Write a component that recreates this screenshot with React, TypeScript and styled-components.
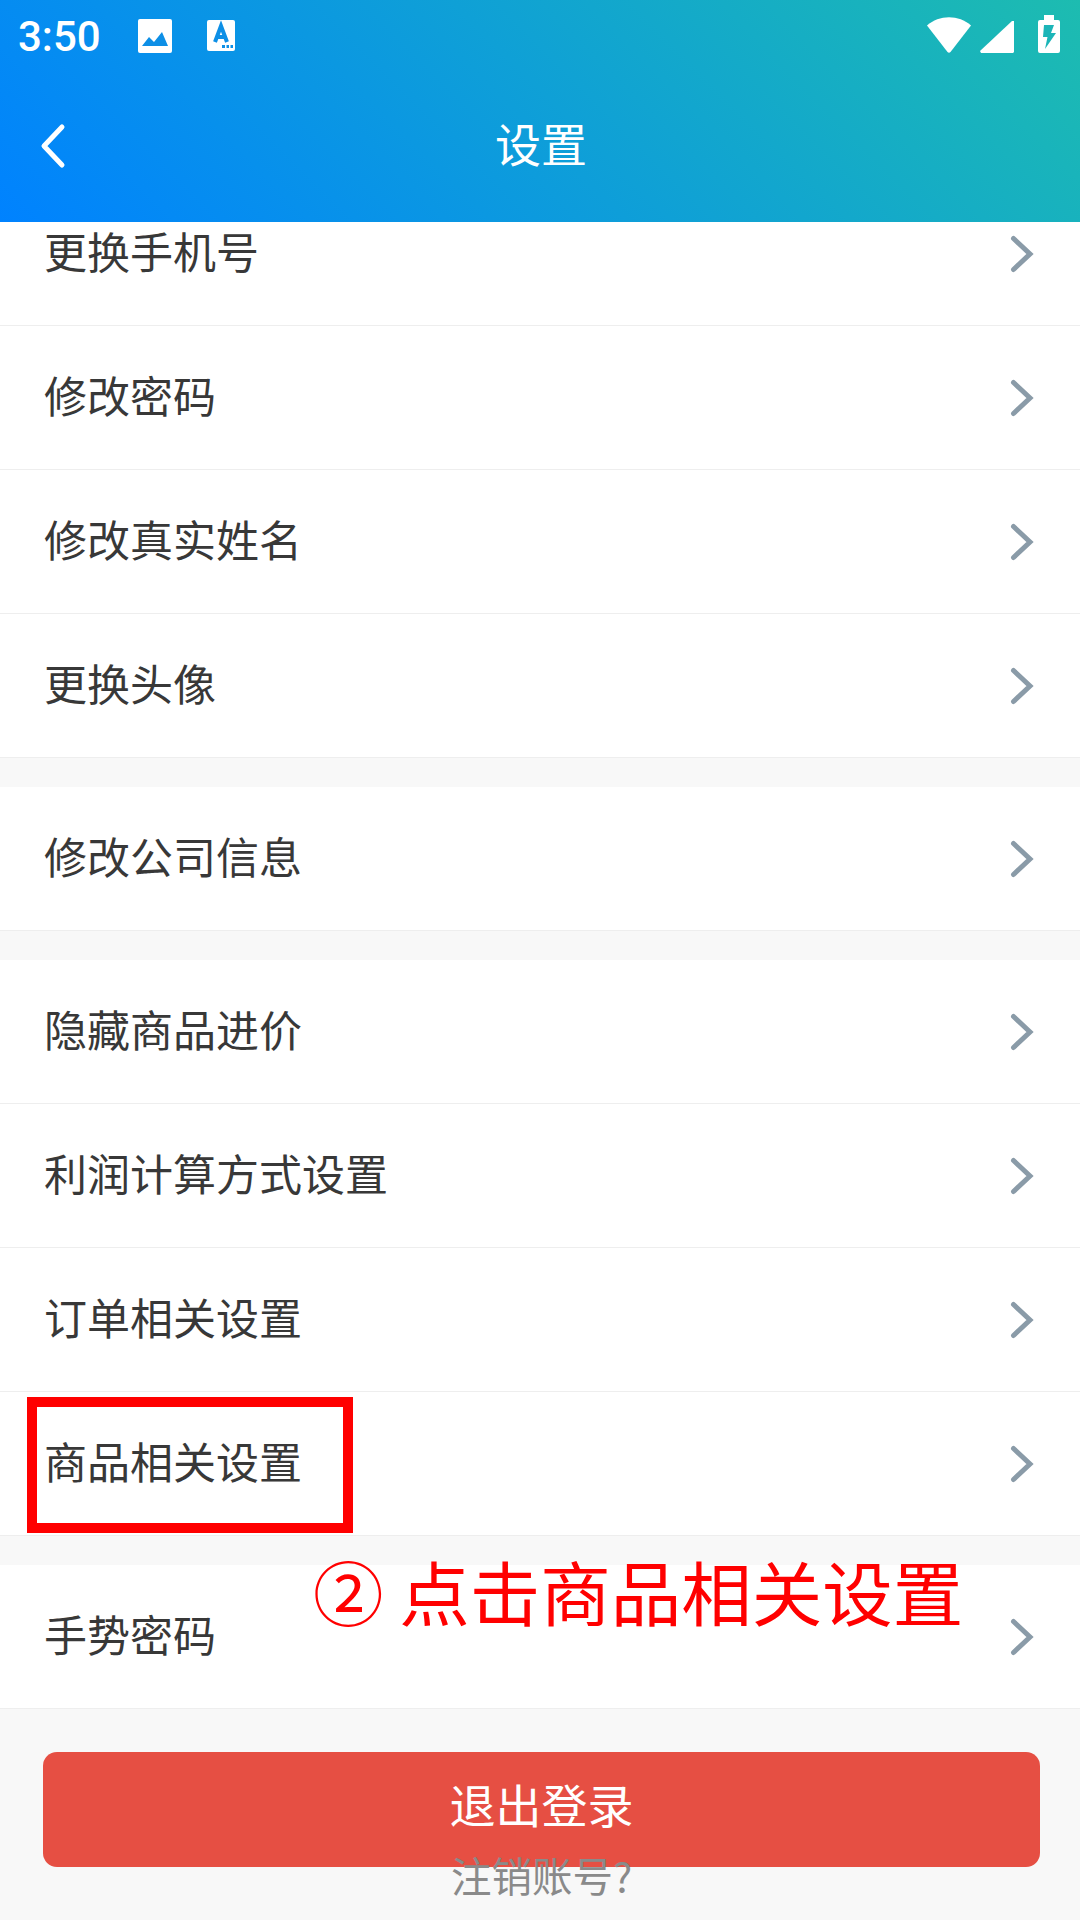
import { createGlobalStyle, styled } from "styled-components";

const rowGroups = [
	["更换手机号", "修改密码", "修改真实姓名", "更换头像"],
	["修改公司信息"],
	["隐藏商品进价", "利润计算方式设置", "订单相关设置", "商品相关设置"],
	["手势密码"],
];

const GlobalStyle = createGlobalStyle`
	html, body {
		margin: 0;
		padding: 0;
		background: #f8f8f8;
	}
	* {
		box-sizing: border-box;
	}
`;

const Page = styled.div`
	position: relative;
	width: 1080px;
	height: 1920px;
	overflow: hidden;
	background: #f8f8f8;
	font-family: "Noto Sans CJK SC", "Noto Sans", sans-serif;
`;

const Header = styled.header`
	position: relative;
	z-index: 2;
	height: 222px;
	background: linear-gradient(45deg, #0082ff, #1dbcb0);
	color: #fff;
`;

const StatusBar = styled.div`
	display: flex;
	align-items: flex-end;
	height: 74px;
	padding: 0 20px 21px 18px;
`;

const Clock = styled.span`
	font-family: Roboto, sans-serif;
	font-size: 42px;
	font-weight: 500;
	line-height: 32px;
	width: 120px;
`;

const StatusGroup = styled.div<{ $gap: number }>`
	display: flex;
	align-items: flex-end;
	gap: ${(p) => p.$gap}px;
`;

const Spacer = styled.div`
	flex: 1;
`;

const TitleBar = styled.div`
	display: flex;
	align-items: center;
	justify-content: center;
	position: relative;
	height: 148px;
`;

const BackButton = styled.svg`
	position: absolute;
	left: 38px;
	top: 49px;
`;

const Title = styled.h1`
	margin: 0 0 12px 2px;
	font-size: 46px;
	font-weight: 400;
`;

const List = styled.div`
	margin-top: -40px;
`;

const Group = styled.section`
	margin-bottom: 29px;
	&:last-child {
		margin-bottom: 0;
	}
`;

const Row = styled.div`
	display: flex;
	align-items: center;
	justify-content: space-between;
	height: 144px;
	padding: 0 46px 0 44px;
	background: #fff;
	border-bottom: 1px solid #eeeeee;
	color: #383838;
	font-size: 43px;
`;

const RowLabel = styled.span`
	margin-bottom: 8px;
`;

const Footer = styled.div`
	display: flex;
	flex-direction: column;
	align-items: center;
	padding: 43px 40px 0 43px;
`;

const LogoutButton = styled.button`
	width: 100%;
	height: 115px;
	padding: 0 0 14px;
	border: none;
	border-radius: 14px;
	background: #e64f43;
	color: #fff;
	font-family: inherit;
	font-size: 46px;
`;

const CancelLink = styled.span`
	position: relative;
	margin-top: -19px;
	color: #8a8a8a;
	font-size: 40.500px;
	line-height: 54px;
`;

const HighlightBox = styled.div`
	position: absolute;
	left: 27px;
	top: 1397px;
	width: 326px;
	height: 136px;
	border: 10px solid #ff0000;
`;

const Annotation = styled.div`
	position: absolute;
	left: 313px;
	top: 1540px;
	color: #ff0000;
	font-size: 70.500px;
	line-height: 100px;
	white-space: nowrap;
`;

const Chevron = () => (
	<svg width="24" height="38" viewBox="0 0 24 38">
		<path
			d="M3.500 3.500 L20 19 L3.500 34.500"
			fill="none"
			stroke="#8a9ba8"
			strokeWidth="5"
			strokeLinecap="round"
			strokeLinejoin="miter"
		/>
	</svg>
);

const SignalIcons = () => (
	<StatusGroup $gap={8}>
		<svg width="46" height="36" viewBox="0 0 46 36">
			<path
				d="M1 8.500 C13 -2.500 33 -2.500 45 8.500 L24.500 35 Q23 36.500 21.500 35 Z"
				fill="#fff"
			/>
		</svg>
		<svg width="34" height="33" viewBox="0 0 34 33" style={{ marginRight: 16 }}>
			<path d="M32 1 L34 1 V32 L33 33 H1 L0 31 Z" fill="#fff" />
		</svg>
		<svg width="22" height="38" viewBox="0 0 22 38">
			<path
				d="M6 0 H16 V5 H20 Q22 5 22 7 V36 Q22 38 20 38 H2 Q0 38 0 36 V7 Q0 5 2 5 H6 Z"
				fill="#fff"
			/>
			<path d="M6 10 H16 L13 18 H18 L7 34 L9.500 22 H5 Z" fill="#1cb5b8" />
		</svg>
	</StatusGroup>
);

const App = () => (
	<Page>
		<GlobalStyle />
		<Header>
			<StatusBar>
				<Clock>3:50</Clock>
				<StatusGroup $gap={35}>
					<svg width="34" height="34" viewBox="0 0 34 34">
						<rect width="34" height="34" rx="2" fill="#fff" />
						<path d="M4 27 L11 18 L16 23 L24 13 L30 27 Z" fill="#0d8fe6" />
					</svg>
					<svg
						width="28"
						height="31"
						viewBox="0 0 28 31"
						style={{ marginBottom: 2 }}
					>
						<rect width="28" height="31" rx="2" fill="#fff" />
						<path
							d="M8 22 L14 6 L20 22 M10 17 H18"
							fill="none"
							stroke="#0d8fe6"
							strokeWidth="4"
						/>
						<path
							d="M15 26.500 H18 M19.500 26.500 H22 M23.500 26.500 H26"
							stroke="#0d8fe6"
							strokeWidth="3"
						/>
					</svg>
				</StatusGroup>
				<Spacer />
				<SignalIcons />
			</StatusBar>
			<TitleBar>
				<BackButton width="30" height="46" viewBox="0 0 30 46">
					<path
						d="M24 4 L6 23 L24 42"
						fill="none"
						stroke="#fff"
						strokeWidth="5"
						strokeLinecap="round"
						strokeLinejoin="round"
					/>
				</BackButton>
				<Title>设置</Title>
			</TitleBar>
		</Header>
		<List>
			{rowGroups.map((group, i) => (
				<Group key={i}>
					{group.map((name) => (
						<Row key={name}>
							<RowLabel>{name}</RowLabel>
							<Chevron />
						</Row>
					))}
				</Group>
			))}
		</List>
		<Footer>
			<LogoutButton>退出登录</LogoutButton>
			<CancelLink>注销账号?</CancelLink>
		</Footer>
		<HighlightBox />
		<Annotation>② 点击商品相关设置</Annotation>
	</Page>
);

export default App;
